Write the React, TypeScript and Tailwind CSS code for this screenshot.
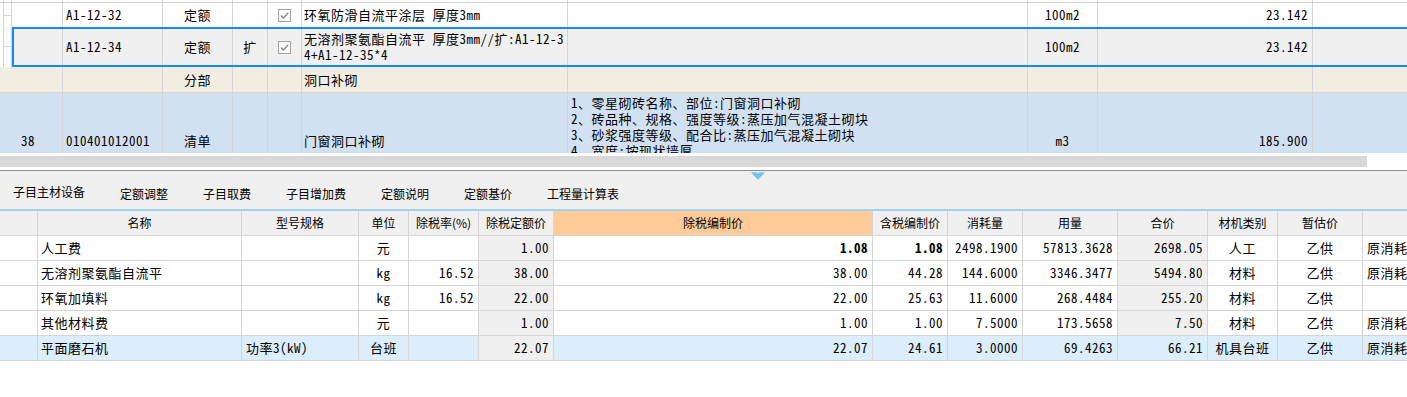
import React from "react";

const mono =
  "font-['Noto_Sans_Mono_CJK_SC','Liberation_Mono','Noto_Sans_CJK_SC',monospace] text-[13px] tracking-[0.5px]";
const sans = "font-['Noto_Sans_CJK_SC','Noto_Sans',sans-serif] text-[12px]";
const line = "border-[#d5d5d5]";

function Cell({
  w,
  className = "",
  children,
}: {
  w: string;
  className?: string;
  children?: React.ReactNode;
}) {
  return (
    <div
      className={`${w} shrink-0 h-full border-r ${line} flex items-center overflow-hidden whitespace-nowrap ${className}`}
    >
      {children}
    </div>
  );
}

function Check() {
  return (
    <svg width="13" height="13" viewBox="0 0 13 13">
      <rect x="0.5" y="0.5" width="12" height="12" fill="#fbfbfb" stroke="#a4a4a4" />
      <polyline points="3,6.5 5.5,9 10,4" fill="none" stroke="#8a8a8a" strokeWidth="1.4" />
    </svg>
  );
}

function Gutter({ lineAt }: { lineAt?: string }) {
  return (
    <div className="w-[12px] shrink-0 h-full flex bg-white">
      <div className={`ml-[3px] w-[9px] h-full border-l border-r ${line}`}>
        {lineAt ? <div className={`${lineAt} border-b ${line}`} /> : null}
      </div>
    </div>
  );
}

function TopTable() {
  return (
    <div className={`h-[153px] overflow-hidden ${mono} text-black`}>
      {/* row 0 (tail of previous row) */}
      <div className={`h-[3px] flex border-b ${line} bg-white`}>
        <Gutter />
        <Cell w="w-[51px]" />
        <Cell w="w-[100px]" />
        <Cell w="w-[70px]" />
        <Cell w="w-[35px]" />
        <Cell w="w-[34px]" />
        <Cell w="w-[266px]" />
        <Cell w="w-[460px]" />
        <Cell w="w-[70px]" />
        <Cell w="w-[215px]" />
        <div className="flex-1" />
      </div>
      {/* row 1 */}
      <div className="h-[24px] flex bg-white">
        <Gutter lineAt="h-[13px]" />
        <Cell w="w-[51px]" />
        <Cell w="w-[100px]" className="pl-[3px]">A1-12-32</Cell>
        <Cell w="w-[70px]" className="justify-center">定额</Cell>
        <Cell w="w-[35px]" />
        <Cell w="w-[34px]" className="justify-center">
          <Check />
        </Cell>
        <Cell w="w-[266px]" className="pl-[2px]">环氧防滑自流平涂层 厚度3mm</Cell>
        <Cell w="w-[460px]" />
        <Cell w="w-[70px]" className="justify-center">100m2</Cell>
        <Cell w="w-[215px]" className="justify-end pr-[4px]">23.142</Cell>
        <div className="flex-1" />
      </div>
      {/* row 2 selected */}
      <div className="h-[40px] flex relative">
        <Gutter lineAt="h-[20px]" />
        <div className="flex-1 flex h-full bg-[#f0f0f0]">
          <Cell w="w-[51px]" />
          <Cell w="w-[100px]" className="pl-[3px]">A1-12-34</Cell>
          <Cell w="w-[70px]" className="justify-center">定额</Cell>
          <Cell w="w-[35px]" className="justify-center">扩</Cell>
          <Cell w="w-[34px]" className="justify-center">
            <Check />
          </Cell>
          <Cell w="w-[266px]" className="pl-[2px]">
            <div className="leading-[16px]">
              <div>无溶剂聚氨酯自流平 厚度3mm//扩:A1-12-3</div>
              <div>4+A1-12-35*4</div>
            </div>
          </Cell>
          <Cell w="w-[460px]" />
          <Cell w="w-[70px]" className="justify-center">100m2</Cell>
          <Cell w="w-[215px]" className="justify-end pr-[4px]">23.142</Cell>
          <div className="flex-1" />
        </div>
        <div className="absolute left-[12px] top-0 right-[-10px] h-[40px] border-2 border-[#1388ff] pointer-events-none" />
      </div>
      {/* row 3 分部 */}
      <div className={`h-[26px] flex border-b ${line} bg-[#f1eee1]`}>
        <Cell w="w-[63px]" />
        <Cell w="w-[100px]" />
        <Cell w="w-[70px]" className="justify-center">分部</Cell>
        <Cell w="w-[35px]" />
        <Cell w="w-[34px]" />
        <Cell w="w-[266px]" className="pl-[2px]">洞口补砌</Cell>
        <Cell w="w-[460px]" />
        <Cell w="w-[70px]" />
        <Cell w="w-[215px]" />
        <div className="flex-1" />
      </div>
      {/* row 4 清单 */}
      <div className={`h-[96px] flex bg-[#d2e1f1]`}>
        <Cell w="w-[63px]" className="pl-[21px]">38</Cell>
        <Cell w="w-[100px]" className="pl-[3px]">010401012001</Cell>
        <Cell w="w-[70px]" className="justify-center">清单</Cell>
        <Cell w="w-[35px]" />
        <Cell w="w-[34px]" />
        <Cell w="w-[266px]" className="pl-[2px]">门窗洞口补砌</Cell>
        <Cell w="w-[460px]" className="!items-start pl-[3px] pt-[2px]">
          <div className="leading-[16px]">
            <div>1、零星砌砖名称、部位:门窗洞口补砌</div>
            <div>2、砖品种、规格、强度等级:蒸压加气混凝土砌块</div>
            <div>3、砂浆强度等级、配合比:蒸压加气混凝土砌块</div>
            <div>4、宽度:按现状墙厚</div>
          </div>
        </Cell>
        <Cell w="w-[70px]" className="justify-center">m3</Cell>
        <Cell w="w-[215px]" className="justify-end pr-[4px]">185.900</Cell>
        <div className="flex-1" />
      </div>
    </div>
  );
}

const tabs = ["子目主材设备", "定额调整", "子目取费", "子目增加费", "定额说明", "定额基价", "工程量计算表"];

function TabBar() {
  return (
    <div className={`h-[38px] bg-[#f0f0f0] relative ${sans} text-black`}>
      <div className="flex gap-[35px] pl-[13px] pt-[15px] leading-[16px]">
        {tabs.map((t, i) => (
          <div key={t} className={i === 0 ? "-mt-[2px]" : ""}>
            {t}
          </div>
        ))}
      </div>
      <svg
        className="absolute left-[750px] top-[1px]"
        width="16"
        height="9"
        viewBox="0 0 16 9"
      >
        <polygon points="0,0 16,0 8,8.5" fill="#b9e2fa" />
        <polyline points="2.5,0.5 8,6 13.5,0.5" fill="none" stroke="#5db6ee" strokeWidth="1.3" />
        <polyline points="5,0.5 8,3.5 11,0.5" fill="none" stroke="#5db6ee" strokeWidth="1.1" />
      </svg>
    </div>
  );
}

const headers: { t: string; w: string; cls?: string }[] = [
  { t: "", w: "w-[38px]" },
  { t: "名称", w: "w-[204px]" },
  { t: "型号规格", w: "w-[117px]" },
  { t: "单位", w: "w-[50px]" },
  { t: "除税率(%)", w: "w-[70px]" },
  { t: "除税定额价", w: "w-[75px]" },
  { t: "除税编制价", w: "w-[319px]", cls: "bg-[#fecb98]" },
  { t: "含税编制价", w: "w-[75px]" },
  { t: "消耗量", w: "w-[75px]" },
  { t: "用量", w: "w-[95px]" },
  { t: "合价", w: "w-[90px]" },
  { t: "材机类别", w: "w-[70px]" },
  { t: "暂估价", w: "w-[85px]" },
];

type R = {
  name: string;
  spec?: string;
  unit: string;
  rate?: string;
  base: string;
  price: string;
  tax: string;
  cons: string;
  qty: string;
  total: string;
  type: string;
  est: string;
  last?: string;
  bold?: boolean;
  sel?: boolean;
};

const rows: R[] = [
  { name: "人工费", unit: "元", base: "1.00", price: "1.08", tax: "1.08", cons: "2498.1900", qty: "57813.3628", total: "2698.05", type: "人工", est: "乙供", last: "原消耗量", bold: true },
  { name: "无溶剂聚氨酯自流平", unit: "kg", rate: "16.52", base: "38.00", price: "38.00", tax: "44.28", cons: "144.6000", qty: "3346.3477", total: "5494.80", type: "材料", est: "乙供", last: "原消耗量" },
  { name: "环氧加填料", unit: "kg", rate: "16.52", base: "22.00", price: "22.00", tax: "25.63", cons: "11.6000", qty: "268.4484", total: "255.20", type: "材料", est: "乙供" },
  { name: "其他材料费", unit: "元", base: "1.00", price: "1.00", tax: "1.00", cons: "7.5000", qty: "173.5658", total: "7.50", type: "材料", est: "乙供", last: "原消耗量" },
  { name: "平面磨石机", spec: "功率3(kW)", unit: "台班", base: "22.07", price: "22.07", tax: "24.61", cons: "3.0000", qty: "69.4263", total: "66.21", type: "机具台班", est: "乙供", last: "原消耗量", sel: true },
];

function BottomTable() {
  return (
    <div>
      <div className={`h-[25px] flex border-b ${line} bg-[#f0f0f0] ${sans} text-black`}>
        {headers.map((h, i) => (
          <Cell key={i} w={h.w} className={`justify-center ${h.cls ?? ""}`}>
            {h.t}
          </Cell>
        ))}
        <div className="flex-1" />
      </div>
      {rows.map((r, i) => {
        const bg = r.sel ? "bg-[#dcedfc]" : "bg-white";
        const b = r.bold ? "font-bold" : "";
        return (
          <div key={i} className={`h-[25px] flex border-b ${line} ${bg} ${mono} text-black`}>
            <Cell w="w-[38px]" />
            <Cell w="w-[204px]" className="pl-[3px]">{r.name}</Cell>
            <Cell w="w-[117px]" className="pl-[4px]">{r.spec ?? ""}</Cell>
            <Cell w="w-[50px]" className="justify-center">{r.unit}</Cell>
            <Cell w="w-[70px]" className="justify-end pr-[4px]">{r.rate ?? ""}</Cell>
            <Cell w="w-[75px]" className="justify-end pr-[4px] bg-[#f0f0f0]">{r.base}</Cell>
            <Cell w="w-[319px]" className={`justify-end pr-[4px] ${b}`}>{r.price}</Cell>
            <Cell w="w-[75px]" className={`justify-end pr-[4px] ${b}`}>{r.tax}</Cell>
            <Cell w="w-[75px]" className="justify-end pr-[4px]">{r.cons}</Cell>
            <Cell w="w-[95px]" className="justify-end pr-[4px]">{r.qty}</Cell>
            <Cell w="w-[90px]" className={`justify-end pr-[4px] ${r.sel ? "" : "bg-[#f0f0f0]"}`}>{r.total}</Cell>
            <Cell w="w-[70px]" className="justify-center">{r.type}</Cell>
            <Cell w="w-[85px]" className="justify-center">{r.est}</Cell>
            <div className="flex-1 h-full flex items-center pl-[4px] overflow-hidden whitespace-nowrap">
              {r.last ?? ""}
            </div>
          </div>
        );
      })}
    </div>
  );
}

export default function App() {
  return (
    <div className="w-[1407px] h-[397px] bg-white overflow-hidden">
      <TopTable />
      <div className="h-[3px]" />
      <div className="h-[11px] flex">
        <div className="w-[1367px] bg-[#d9d9d9]" />
      </div>
      <div className="h-[3px]" />
      <div className="h-px bg-[#8c8c8c]" />
      <TabBar />
      <div className="h-[2px] bg-[#9fd2f4]" />
      <BottomTable />
    </div>
  );
}
